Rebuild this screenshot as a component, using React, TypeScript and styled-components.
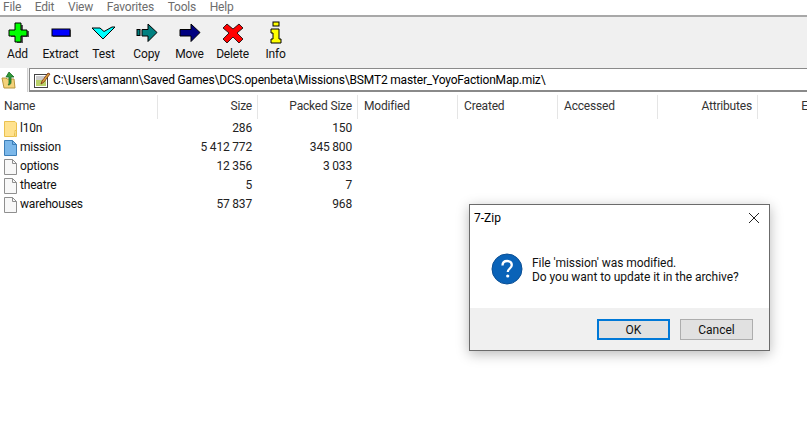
import { createGlobalStyle } from 'styled-components'
import styled from 'styled-components'

const menus = ['File', 'Edit', 'View', 'Favorites', 'Tools', 'Help']

const columns = [
  { label: 'Name', align: 'left' },
  { label: 'Size', align: 'right' },
  { label: 'Packed Size', align: 'right' },
  { label: 'Modified', align: 'left' },
  { label: 'Created', align: 'left' },
  { label: 'Accessed', align: 'left' },
  { label: 'Attributes', align: 'right' },
  { label: 'Encrypted', align: 'right' },
]

const files = [
  { name: 'l10n', size: '286', packed: '150', kind: 'folder' },
  { name: 'mission', size: '5 412 772', packed: '345 800', kind: 'blue' },
  { name: 'options', size: '12 356', packed: '3 033', kind: 'plain' },
  { name: 'theatre', size: '5', packed: '7', kind: 'plain' },
  { name: 'warehouses', size: '57 837', packed: '968', kind: 'plain' },
]

const GlobalStyle = createGlobalStyle`
  html, body {
    margin: 0;
    padding: 0;
    background: #ffffff;
    overflow: hidden;
  }
  body {
    font-family: Roboto, 'Open Sans', sans-serif;
    font-size: 12px;
    letter-spacing: -0.18px;
    color: #000000;
  }
`

const Page = styled.div`
  position: relative;
  width: 807px;
  height: 438px;
  overflow: hidden;
  background: #ffffff;
`

const MenuBar = styled.div`
  height: 17px;
  display: flex;
  align-items: flex-start;
  gap: 13.6px;
  padding-left: 3px;
  box-sizing: border-box;
  border-bottom: 2px solid #a8a8a8;
`

const MenuItem = styled.span`
  color: #6d6d6d;
  line-height: 14px;
`

const Toolbar = styled.div`
  height: 50px;
  display: flex;
  background: #f0f0f0;
  box-sizing: border-box;

  & > :first-child {
    margin-left: -4px;
  }
`

const ToolButton = styled.div`
  width: 43px;
  display: flex;
  flex-direction: column;
  align-items: center;
  padding-top: 4px;
  box-sizing: border-box;
  color: #111111;

  svg {
    display: block;
    width: 24px;
    height: 24px;
  }
`

const ToolLabel = styled.span`
  margin-top: 1px;
  line-height: 16px;
  white-space: nowrap;
`

const AddressRow = styled.div`
  height: 25px;
  display: flex;
  background: #f0f0f0;
  border-top: 1px solid #f0f0f0;
  box-sizing: border-box;
`

const UpButton = styled.div`
  width: 28px;
  display: flex;
  align-items: center;
  padding-left: 1px;
  background: #ffffff;
  box-sizing: border-box;
  border-right: 1px solid #d0d0d0;
`

const AddressField = styled.div`
  flex: 1;
  margin-left: 1px;
  display: flex;
  align-items: center;
  gap: 2px;
  padding-left: 3px;
  background: #ffffff;
  border-top: 1px solid #8a8a8a;
  border-left: 1px solid #8a8a8a;
  border-bottom: 2px solid #8a8a8a;
  box-sizing: border-box;
  white-space: nowrap;
`

const HeaderRow = styled.div`
  height: 24px;
  margin-top: 3px;
  display: flex;
`

const HeaderCell = styled.div<{ $align: string }>`
  flex: 0 0 100px;
  box-sizing: border-box;
  height: 24px;
  line-height: 22px;
  padding: 0 5px 0 6px;
  text-align: ${(p) => p.$align};
  border-right: 1px solid #e5e5e5;
  color: #333333;
  white-space: nowrap;

  &:first-child {
    flex-basis: 158px;
    padding-left: 4px;
  }

  &:last-child {
    border-right: none;
  }
`

const FileList = styled.div`
  display: flex;
  flex-direction: column;
`

const FileRow = styled.div`
  height: 19px;
  display: flex;
  align-items: center;
  line-height: 19px;
`

const NameCell = styled.div`
  flex: 0 0 158px;
  display: flex;
  align-items: center;
  gap: 3px;
  padding-left: 4px;
  box-sizing: border-box;
  color: #111111;
`

const NumberCell = styled.div`
  flex: 0 0 100px;
  padding-right: 6px;
  box-sizing: border-box;
  text-align: right;
  color: #222222;
  white-space: nowrap;
`

const Dialog = styled.div`
  position: absolute;
  left: 469px;
  top: 204px;
  width: 301px;
  height: 147px;
  box-sizing: border-box;
  display: flex;
  flex-direction: column;
  background: #ffffff;
  border: 1px solid #6b6b6b;
  box-shadow: 0 3px 12px rgba(0, 0, 0, 0.28);
  letter-spacing: 0;
`

const TitleBar = styled.div`
  height: 26px;
  display: flex;
  align-items: center;
  justify-content: space-between;
  padding: 0 9px 0 4px;
  flex-shrink: 0;
`

const MessageRow = styled.div`
  flex: 1;
  display: flex;
  align-items: flex-start;
  gap: 9px;
  padding: 22px 0 0 21px;
`

const MessageText = styled.div`
  line-height: 13.5px;
  letter-spacing: -0.05px;
  padding-top: 4px;
  color: #111111;
  white-space: nowrap;
`

const DialogFooter = styled.div`
  height: 42px;
  flex-shrink: 0;
  display: flex;
  justify-content: flex-end;
  align-items: flex-start;
  gap: 10px;
  padding: 11px 16px 0 0;
  box-sizing: border-box;
  background: #f0f0f0;
`

const DialogButton = styled.button<{ $primary?: boolean }>`
  width: 73px;
  height: 21px;
  padding: 0;
  font: inherit;
  color: #111111;
  background: #e1e1e1;
  border: ${(p) => (p.$primary ? '2px solid #0078d7' : '1px solid #adadad')};
`

function AddIcon() {
  return (
    <svg viewBox="0 0 24 24">
      <path d="M10 3h6v6h6v6h-6v6h-6v-6H4V9h6z" fill="#555" transform="translate(1 1)" />
      <path d="M9 2h6v7h6v6h-6v6H9v-6H3V9h6z" fill="#00ff00" stroke="#000" strokeWidth="1" />
    </svg>
  )
}

function ExtractIcon() {
  return (
    <svg viewBox="0 0 24 24">
      <rect x="4" y="9" width="18" height="7" fill="#666" />
      <rect x="3" y="8" width="18" height="7" fill="#0000ff" stroke="#000" strokeWidth="1" />
    </svg>
  )
}

function TestIcon() {
  return (
    <svg viewBox="0 0 24 24">
      <path d="M1 6h8l4 3.500L21 5h3L12 17z" fill="#00ffff" stroke="#000" strokeWidth="1" transform="translate(-1 1)" />
    </svg>
  )
}

function CopyIcon() {
  return (
    <svg viewBox="0 0 24 24">
      <rect x="2" y="8.500" width="3" height="6" fill="#008080" stroke="#000" strokeWidth="1" />
      <path d="M7 8.500h6V3l9 8.500-9 9V15H7z" fill="#008080" stroke="#000" strokeWidth="1" />
    </svg>
  )
}

function MoveIcon() {
  return (
    <svg viewBox="0 0 24 24">
      <path d="M2 8.500h11V3l9 8.500-9 9V15H2z" fill="#000080" stroke="#000" strokeWidth="1" />
    </svg>
  )
}

function DeleteIcon() {
  return (
    <svg viewBox="0 0 24 24">
      <path d="M6 3l6 5 6-5 4 4-6 5 6 6-4 4-6-6-6 6-4-4 6-6-6-5z" fill="#ff0000" stroke="#000" strokeWidth="0.8" />
    </svg>
  )
}

function InfoIcon() {
  return (
    <svg viewBox="0 0 24 24">
      <rect x="9" y="1" width="6" height="4" fill="#ffff00" stroke="#000" strokeWidth="1" />
      <path d="M7 8h8v10h2v4H7v-4h2v-6H7z" fill="#ffff00" stroke="#000" strokeWidth="1" />
    </svg>
  )
}

const tools = [
  { label: 'Add', icon: <AddIcon /> },
  { label: 'Extract', icon: <ExtractIcon /> },
  { label: 'Test', icon: <TestIcon /> },
  { label: 'Copy', icon: <CopyIcon /> },
  { label: 'Move', icon: <MoveIcon /> },
  { label: 'Delete', icon: <DeleteIcon /> },
  { label: 'Info', icon: <InfoIcon /> },
]

function UpFolderIcon() {
  return (
    <svg width="18" height="20" viewBox="0 0 18 20">
      <path d="M1 8h4l1 1h7l1 9H3z" fill="#f4d27a" stroke="#b8963e" strokeWidth="1" />
      <path d="M8 2l5 5h-3v5c0 2-1 3-3 3 1-1 1-2 1-3V7H5z" fill="#2f9b3a" stroke="#1c6b24" strokeWidth="0.8" />
    </svg>
  )
}

function ArchiveIcon() {
  return (
    <svg width="18" height="18" viewBox="0 0 18 18">
      <rect x="1.500" y="3.500" width="13" height="13" fill="#ffffff" stroke="#444" strokeWidth="1" />
      <rect x="3" y="9" width="10" height="6" fill="#b9d16a" />
      <path d="M3 6h9M3 8h7" stroke="#999" strokeWidth="1" />
      <path d="M8 13l1-3 6-8 2 1-6 8z" fill="#d8a33a" stroke="#7a2a10" strokeWidth="0.8" />
    </svg>
  )
}

function FileIcon({ kind }: { kind: string }) {
  if (kind === 'folder') {
    return (
      <svg width="13" height="16" viewBox="0 0 13 16">
        <path d="M.5.5h10.500l1.500 1.500v11l-2-.5v3H.5z" fill="#ffe28f" stroke="#eac14f" strokeWidth="1" />
        <path d="M11 9.500v6h1.500v-6z" fill="#fff4c7" stroke="#eac14f" strokeWidth="1" />
      </svg>
    )
  }
  const fill = kind === 'blue' ? '#7cb8ea' : '#f8f8f8'
  const stroke = kind === 'blue' ? '#3d7fb8' : '#8f8f8f'
  return (
    <svg width="13" height="16" viewBox="0 0 13 16">
      <path d="M.5.5h8l4 4v11H.5z" fill={fill} stroke={stroke} strokeWidth="1" />
      <path d="M8.500.5v4h4" fill="none" stroke={stroke} strokeWidth="1" />
    </svg>
  )
}

function QuestionIcon() {
  return (
    <svg width="32" height="32" viewBox="0 0 32 32">
      <circle cx="16" cy="16" r="15" fill="#0a63b8" stroke="#0b4f94" strokeWidth="1" />
      <path d="M11.500 12.500c0-3 2-4.500 4.700-4.500 2.800 0 4.600 1.600 4.600 4 0 3.500-4 3.500-4 7" fill="none" stroke="#ffffff" strokeWidth="2.300" />
      <circle cx="16.700" cy="23" r="1.600" fill="#ffffff" />
    </svg>
  )
}

function CloseIcon() {
  return (
    <svg width="12" height="12" viewBox="0 0 12 12">
      <path d="M1 1l10 10M11 1L1 11" stroke="#222" strokeWidth="1" fill="none" />
    </svg>
  )
}

export default function App() {
  return (
    <Page>
      <GlobalStyle />
      <MenuBar>
        {menus.map((m) => (
          <MenuItem key={m}>{m}</MenuItem>
        ))}
      </MenuBar>
      <Toolbar>
        {tools.map((t) => (
          <ToolButton key={t.label}>
            {t.icon}
            <ToolLabel>{t.label}</ToolLabel>
          </ToolButton>
        ))}
      </Toolbar>
      <AddressRow>
        <UpButton>
          <UpFolderIcon />
        </UpButton>
        <AddressField>
          <ArchiveIcon />
          C:\Users\amann\Saved Games\DCS.openbeta\Missions\BSMT2 master_YoyoFactionMap.miz\
        </AddressField>
      </AddressRow>
      <HeaderRow>
        {columns.map((c) => (
          <HeaderCell key={c.label} $align={c.align}>
            {c.label}
          </HeaderCell>
        ))}
      </HeaderRow>
      <FileList>
        {files.map((f) => (
          <FileRow key={f.name}>
            <NameCell>
              <FileIcon kind={f.kind} />
              {f.name}
            </NameCell>
            <NumberCell>{f.size}</NumberCell>
            <NumberCell>{f.packed}</NumberCell>
          </FileRow>
        ))}
      </FileList>
      <Dialog>
        <TitleBar>
          7-Zip
          <CloseIcon />
        </TitleBar>
        <MessageRow>
          <QuestionIcon />
          <MessageText>
            File 'mission' was modified.
            <br />
            Do you want to update it in the archive?
          </MessageText>
        </MessageRow>
        <DialogFooter>
          <DialogButton $primary>OK</DialogButton>
          <DialogButton>Cancel</DialogButton>
        </DialogFooter>
      </Dialog>
    </Page>
  )
}
